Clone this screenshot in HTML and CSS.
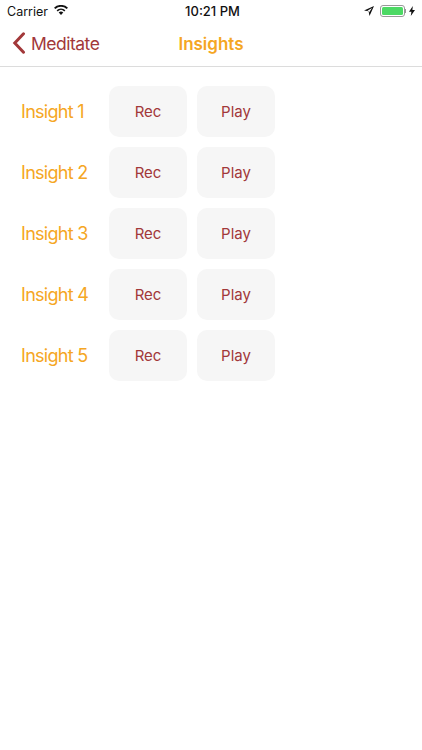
FILE: index.html
```html
<!DOCTYPE html>
<html lang="en">
<head>
<meta charset="utf-8">
<title>Insights</title>
<link rel="stylesheet" href="styles.css">
</head>
<body>
<div class="status">
  <div class="status-left">
    <span>Carrier</span>
    <svg class="wifi" width="14" height="10" viewBox="0 0 14 10"><path d="M7 10 4.700 7.500a3.300 3.300 0 0 1 4.600 0z" fill="#111"/><path d="M3.700 6.400a4.800 4.800 0 0 1 6.600 0l1.100-1.200a6.400 6.400 0 0 0-8.800 0z" fill="#111"/><path d="M1.400 4a8.200 8.200 0 0 1 11.200 0L14 2.700a10.200 10.200 0 0 0-14 0z" fill="#111"/></svg>
  </div>
  <div class="status-time">10:21 PM</div>
  <div class="status-right">
    <svg width="10" height="10" viewBox="0 0 10 10"><path d="M10 0 0 4.400l4.600.9.900 4.700zM8 2 5 6.400 4.800 5 3.300 4.700z" fill="#111" fill-rule="evenodd"/></svg>
    <div class="battery"><div class="battery-fill"></div></div>
    <div class="battery-tip"></div>
    <svg width="6" height="10" viewBox="0 0 6 10"><path d="M3.800 0 0 5.700h2.400L1.800 10 6 4.100H3.400z" fill="#111"/></svg>
  </div>
</div>
<header class="nav">
  <div class="back">
    <svg width="14" height="22" viewBox="0 0 14 22"><path d="M11.500 1.800 2.800 11l8.700 9.200" fill="none" stroke="#a2383a" stroke-width="3" stroke-linecap="round"/></svg>
    <span>Meditate</span>
  </div>
  <h1 class="title">Insights</h1>
</header>
<main class="list">
  <div class="row"><span class="label">Insight 1</span><button class="btn">Rec</button><button class="btn">Play</button></div>
  <div class="row"><span class="label">Insight 2</span><button class="btn">Rec</button><button class="btn">Play</button></div>
  <div class="row"><span class="label">Insight 3</span><button class="btn">Rec</button><button class="btn">Play</button></div>
  <div class="row"><span class="label">Insight 4</span><button class="btn">Rec</button><button class="btn">Play</button></div>
  <div class="row"><span class="label">Insight 5</span><button class="btn">Rec</button><button class="btn">Play</button></div>
</main>
</body>
</html>
```
FILE: styles.css
```css
* { box-sizing: border-box; }
html, body { margin: 0; padding: 0; background: #fff; }
body { width: 422px; height: 750px; overflow: hidden; font-family: Inter, Roboto, "Liberation Sans", sans-serif; }

.status { display: grid; grid-template-columns: 1fr auto 1fr; align-items: center; height: 22px; padding: 0 7px; font-size: 12.500px; color: #111; }
.status-left { display: flex; align-items: center; gap: 6px; }
.wifi { margin-bottom: 2px; }
.status-time { font-weight: 500; font-size: 13px; padding-left: 3px; }
.status-right { display: flex; align-items: center; justify-content: flex-end; }
.status-right svg:first-child { margin-right: 6px; }
.battery { width: 25px; height: 12px; border: 1px solid #999; border-radius: 3px; padding: 1px; }
.battery-fill { height: 100%; background: #4cd964; border-radius: 1.500px; }
.battery-tip { width: 1.500px; height: 4px; background: #999; margin-right: 3px; }

.nav { position: relative; display: flex; align-items: center; justify-content: center; height: 45px; border-bottom: 1px solid #dcdcdc; }
.back { position: absolute; left: 12px; top: 10px; display: flex; align-items: center; gap: 5px; color: #a2383a; font-size: 17.500px; line-height: 21px; letter-spacing: -0.5px; }
.title { margin: 0; color: #f5a623; font-size: 17px; font-weight: 600; }

.list { display: flex; flex-direction: column; gap: 10px; padding: 19px 0 0 21px; }
.row { display: flex; align-items: center; height: 51px; }
.label { width: 88px; color: #f5a623; font-size: 18px; letter-spacing: -0.7px; }
.btn { width: 78px; height: 51px; margin-right: 10px; border: 0; border-radius: 10px; background: #f6f6f6; color: #a2383a; font: inherit; font-size: 15px; }
```
